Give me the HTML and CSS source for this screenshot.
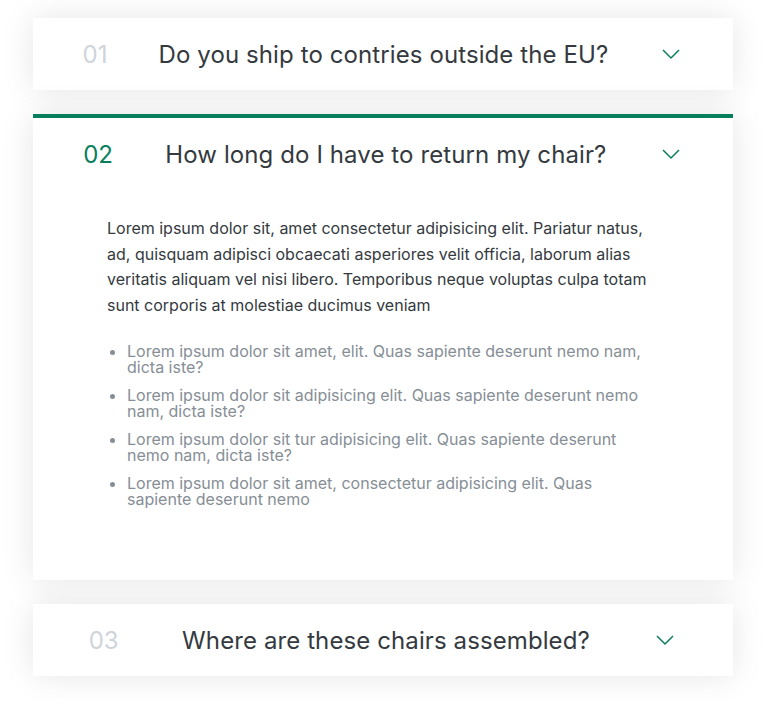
FILE: index.html
```html
<!DOCTYPE html>
<html lang="en">
<head>
<meta charset="utf-8">
<title>FAQ accordion</title>
<link rel="stylesheet" href="styles.css">
</head>
<body>
<div class="accordion">
  <div class="item">
    <div class="header">
      <span class="number">01</span>
      <span class="title">Do you ship to contries outside the EU?</span>
      <svg class="chev" width="24" height="24" viewBox="0 0 24 24"><path d="M4 8 L12 16 L20 8" fill="none" stroke="#087f5b" stroke-width="1.5"/></svg>
    </div>
  </div>
  <div class="item open">
    <div class="header">
      <span class="number">02</span>
      <span class="title">How long do I have to return my chair?</span>
      <svg class="chev" width="24" height="24" viewBox="0 0 24 24"><path d="M4 8 L12 16 L20 8" fill="none" stroke="#087f5b" stroke-width="1.5"/></svg>
    </div>
    <div class="content">
      <p>Lorem ipsum dolor sit, amet consectetur adipisicing elit. Pariatur natus, ad, quisquam adipisci obcaecati asperiores velit officia, laborum alias veritatis aliquam vel nisi libero. Temporibus neque voluptas culpa totam sunt corporis at molestiae ducimus veniam</p>
      <ul>
        <li>Lorem ipsum dolor sit amet, elit. Quas sapiente deserunt nemo nam, dicta iste?</li>
        <li>Lorem ipsum dolor sit adipisicing elit. Quas sapiente deserunt nemo nam, dicta iste?</li>
        <li>Lorem ipsum dolor sit tur adipisicing elit. Quas sapiente deserunt nemo nam, dicta iste?</li>
        <li>Lorem ipsum dolor sit amet, consectetur adipisicing elit. Quas sapiente deserunt nemo</li>
      </ul>
    </div>
  </div>
  <div class="item">
    <div class="header">
      <span class="number">03</span>
      <span class="title">Where are these chairs assembled?</span>
      <svg class="chev" width="24" height="24" viewBox="0 0 24 24"><path d="M4 8 L12 16 L20 8" fill="none" stroke="#087f5b" stroke-width="1.5"/></svg>
    </div>
  </div>
</div>
</body>
</html>
```
FILE: styles.css
```css
* { box-sizing: border-box; margin: 0; padding: 0; }
body {
  font-family: Inter, "Noto Sans", sans-serif;
  color: #343a40;
  background: #fff;
}
.accordion {
  width: 700px;
  margin-left: 33px;
  padding: 18px 0 60px;
  display: flex;
  flex-direction: column;
  gap: 24px;
}
.item {
  background: #fff;
  box-shadow: 0 0 32px rgba(0, 0, 0, 0.1);
}
.item.open {
  border-top: 4px solid #087f5b;
}
.header {
  height: 72px;
  padding: 0 24px;
  display: flex;
  align-items: center;
  justify-content: space-around;
}
.number {
  font-size: 24px;
  font-weight: 400;
  color: #ced4da;
}
.title {
  font-size: 24px;
  font-weight: 400;
  letter-spacing: 0.1px;
}
.open .number { color: #087f5b; }
.chev { display: block; }
.content {
  padding: 26px 74px 73px 74px;
  font-size: 16px;
}
.content p {
  line-height: 25.6px;
}
.content ul {
  margin-top: 25px;
  padding-left: 20px;
  color: #868e96;
  line-height: 16px;
  display: flex;
  flex-direction: column;
  gap: 12px;
}
```
